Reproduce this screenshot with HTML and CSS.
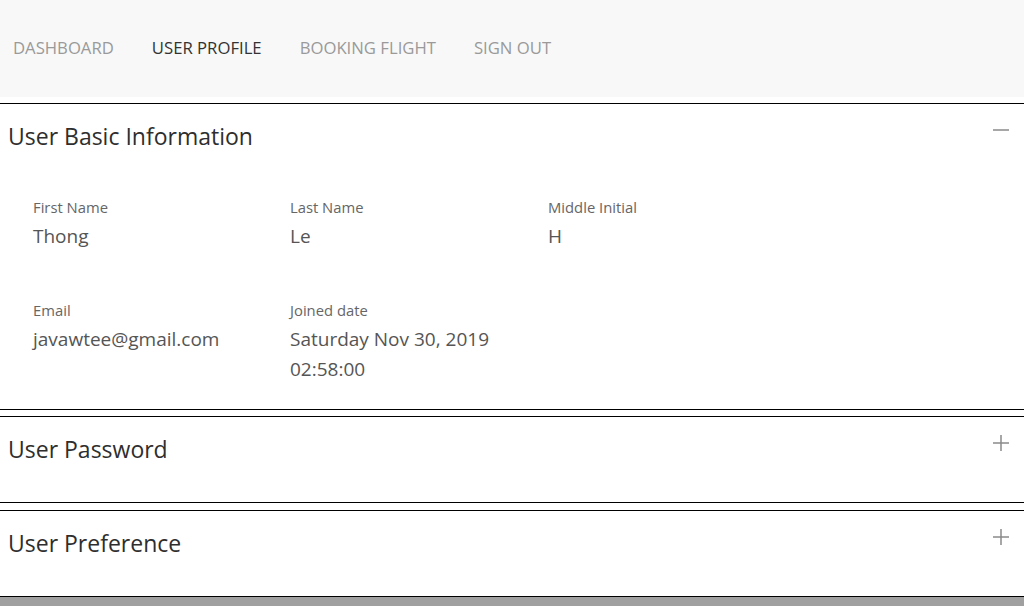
FILE: index.html
```html
<!DOCTYPE html>
<html lang="en">
<head>
<meta charset="utf-8">
<title>User Profile</title>
<link rel="stylesheet" href="styles.css">
</head>
<body>
<nav class="topnav">
  <a class="nav-link" href="#">DASHBOARD</a>
  <a class="nav-link active" href="#">USER PROFILE</a>
  <a class="nav-link" href="#">BOOKING FLIGHT</a>
  <a class="nav-link" href="#">SIGN OUT</a>
</nav>
<main class="content">
  <section class="panel">
    <header class="panel-head">
      <h2 class="panel-title">User Basic Information</h2>
      <svg class="toggle" width="18" height="18" viewBox="0 0 18 18"><path d="M1 9H17" stroke="#8a8a8a" stroke-width="1.5" fill="none"/></svg>
    </header>
    <div class="panel-body">
      <div class="field">
        <div class="label">First Name</div>
        <div class="value">Thong</div>
      </div>
      <div class="field">
        <div class="label">Last Name</div>
        <div class="value">Le</div>
      </div>
      <div class="field">
        <div class="label">Middle Initial</div>
        <div class="value">H</div>
      </div>
      <div class="field">
        <div class="label">Email</div>
        <div class="value">javawtee@gmail.com</div>
      </div>
      <div class="field">
        <div class="label">Joined date</div>
        <div class="value">Saturday Nov 30, 2019<br>02:58:00</div>
      </div>
    </div>
  </section>
  <section class="panel gap7">
    <header class="panel-head">
      <h2 class="panel-title">User Password</h2>
      <svg class="toggle" width="18" height="18" viewBox="0 0 18 18"><path d="M1 9H17M9 1V17" stroke="#8a8a8a" stroke-width="1.5" fill="none"/></svg>
    </header>
  </section>
  <section class="panel last">
    <header class="panel-head">
      <h2 class="panel-title">User Preference</h2>
      <svg class="toggle" width="18" height="18" viewBox="0 0 18 18"><path d="M1 9H17M9 1V17" stroke="#8a8a8a" stroke-width="1.5" fill="none"/></svg>
    </header>
  </section>
</main>
<footer class="footer"></footer>
</body>
</html>
```
FILE: styles.css
```css
* { box-sizing: border-box; }
html, body { margin: 0; padding: 0; }
body {
  font-family: "Open Sans", "Noto Sans", "Liberation Sans", sans-serif;
  background: #fff;
  color: #333;
}
.topnav {
  height: 97px;
  background: #f8f8f8;
  display: flex;
  align-items: center;
  gap: 38px;
  padding: 0 0 3px 13px;
}
.nav-link {
  font-size: 16.7px;
  color: #9a9a9a;
  text-decoration: none;
}
.nav-link.active { color: #333; }
.content { margin-top: 6px; }
.panel {
  border-top: 1px solid #000;
  border-bottom: 1px solid #000;
  margin-bottom: 6px;
  padding-bottom: 21px;
}
.panel.gap7 { margin-bottom: 7px; }
.panel.last { margin-bottom: 0; }
.panel-head {
  display: flex;
  justify-content: space-between;
  align-items: flex-start;
  padding: 16px 14px 16px 8px;
  height: 64px;
}
.panel-title {
  margin: 0;
  font-size: 23px;
  font-weight: 400;
  line-height: 32px;
  color: #2e2e2e;
}
.toggle { margin-top: 1px; }
.panel-body {
  display: grid;
  grid-template-columns: 257px 258px 257px;
  row-gap: 49px;
  padding: 29px 0 4px 33px;
}
.label {
  font-size: 14.8px;
  line-height: 20px;
  color: #666;
}
.value {
  margin-top: 4px;
  font-size: 19px;
  line-height: 30px;
  color: #555;
}
.footer {
  height: 9px;
  background: #a0a0a0;
}
```
